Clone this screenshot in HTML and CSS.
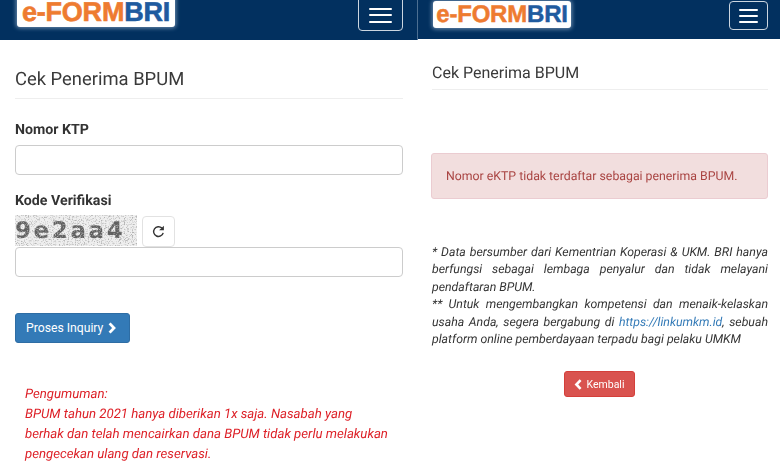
FILE: index.html
```html
<!DOCTYPE html>
<html lang="id">
<head>
<meta charset="utf-8">
<title>Cek Penerima BPUM</title>
<link rel="stylesheet" href="styles.css">
</head>
<body>
<div class="screens">
  <section class="screen screen-left">
    <header class="topbar topbar-left">
      <div class="logo logo-left"><span class="logo-orange">e-FORM</span><span class="logo-blue">BRI</span></div>
      <button class="toggle toggle-left" aria-label="Menu"><i></i><i></i><i></i></button>
    </header>
    <main class="body-left">
      <h1 class="title-left">Cek Penerima BPUM</h1>
      <label class="label label-ktp">Nomor KTP</label>
      <div class="input"></div>
      <label class="label label-kode">Kode Verifikasi</label>
      <div class="captcha-row">
        <div class="captcha">
          <span>9e2aa4</span>
          <svg class="captcha-noise" width="122" height="31">
            <filter id="speckle" x="0" y="0" width="100%" height="100%">
              <feTurbulence type="fractalNoise" baseFrequency="0.75" numOctaves="2" seed="7"/>
              <feColorMatrix type="matrix" values="0 0 0 0 .45  0 0 0 0 .45  0 0 0 0 .45  2.6 2.6 0 0 -2.55"/>
            </filter>
            <rect width="122" height="31" filter="url(#speckle)"/>
          </svg>
        </div>
        <button class="refresh" aria-label="Muat ulang">
          <svg width="13" height="13" viewBox="0 0 16 16"><path d="M13.8 9.6A6 6 0 1 1 12.2 3.8" fill="none" stroke="#333" stroke-width="1.7"/><path d="M14.6 .8v5.8H8.8z" fill="#333"/></svg>
        </button>
      </div>
      <div class="input input-code"></div>
      <button class="btn btn-blue">Proses Inquiry
        <svg class="chev" width="10" height="12" viewBox="0 0 10 12"><path d="M2.6 1.4 7 6l-4.4 4.6" fill="none" stroke="#fff" stroke-width="2.8"/></svg>
      </button>
      <p class="notice">Pengumuman:<br>BPUM tahun 2021 hanya diberikan 1x saja. Nasabah yang berhak dan telah mencairkan dana BPUM tidak perlu melakukan pengecekan ulang dan reservasi.</p>
    </main>
  </section>
  <section class="screen screen-right">
    <header class="topbar topbar-right">
      <div class="logo logo-right"><span class="logo-orange">e-FORM</span><span class="logo-blue">BRI</span></div>
      <button class="toggle toggle-right" aria-label="Menu"><i></i><i></i><i></i></button>
    </header>
    <main class="body-right">
      <h1 class="title-right">Cek Penerima BPUM</h1>
      <div class="alert">Nomor eKTP tidak terdaftar sebagai penerima BPUM.</div>
      <p class="note">* Data bersumber dari Kementrian Koperasi &amp; UKM. BRI hanya berfungsi sebagai lembaga penyalur dan tidak melayani pendaftaran BPUM.<br>** Untuk mengembangkan kompetensi dan menaik-kelaskan usaha Anda, segera bergabung di <a href="#">https://linkumkm.id</a>, sebuah platform online pemberdayaan terpadu bagi pelaku UMKM</p>
      <div class="back-row">
        <button class="btn btn-red">
          <svg class="chev" width="9" height="11" viewBox="0 0 9 11"><path d="M6.6 1.2 2.4 5.5l4.2 4.3" fill="none" stroke="#fff" stroke-width="2.6"/></svg>
          Kembali</button>
      </div>
    </main>
  </section>
</div>
</body>
</html>
```
FILE: styles.css
```css
* { box-sizing: border-box; }
html, body { margin: 0; padding: 0; background: #fff; }
body { width: 780px; height: 470px; overflow: hidden; font-family: Roboto, "Liberation Sans", sans-serif; color: #333; text-rendering: geometricPrecision; }
.screens { display: grid; grid-template-columns: 418px 362px; height: 470px; filter: blur(.35px); }
.screen { overflow: hidden; height: 470px; }

.topbar { display: flex; justify-content: space-between; align-items: flex-end; background: #02305f; overflow: hidden; }
.topbar-left { height: 40px; padding: 0 14px 9px 17px; border-right: 1px solid #4d6f92; }
.topbar-right { height: 39px; padding: 0 12px 9px 15px; }

.logo { display: flex; align-items: center; justify-content: center; background: #fff; border-radius: 3px; font-family: "Liberation Sans", sans-serif; font-weight: 700; white-space: nowrap; box-shadow: 0 0 4px 1px #6f8fb0; }
.logo-left { width: 158px; height: 38px; flex: none; margin-bottom: 4px; padding-top: 9px; font-size: 27px; letter-spacing: -.2px; -webkit-text-stroke: .6px currentColor; }
.logo-right { width: 138px; height: 27px; margin-bottom: 2px; font-size: 24px; letter-spacing: -.2px; -webkit-text-stroke: .5px currentColor; }
.logo-orange { color: #ee7b30; }
.logo-blue { color: #1f5b9f; }

.toggle { display: flex; flex-direction: column; justify-content: center; flex: none; padding: 0; background: transparent; border: 1px solid #ccd6e0; border-radius: 4px; }
.toggle i { display: block; height: 2px; background: #fff; border-radius: 1px; }
.toggle-left { width: 45px; height: 40px; padding: 8px 10px 0; gap: 4.5px; }
.toggle-right { width: 39px; height: 29px; padding: 0 9px; gap: 4px; }

.body-left { padding: 0 15px; }
.title-left { margin: 29px 0 0; padding-bottom: 8px; font-size: 18.4px; line-height: 21px; font-weight: 400; color: #3a3a3a; border-bottom: 1px solid #eee; }
.label { display: block; font-size: 14.2px; font-weight: 700; line-height: 17px; color: #333; }
.label-ktp { margin-top: 23px; margin-bottom: 6px; }
.label-kode { margin-top: 18px; margin-bottom: 5px; }
.input { height: 30px; width: 388px; background: #fff; border: 1px solid #ccc; border-radius: 4px; }
.captcha-row { display: flex; align-items: flex-end; gap: 5px; height: 32px; }
.captcha { position: relative; width: 122px; height: 31px; overflow: hidden; background: #efefef; align-self: flex-start; }
.captcha span { display: block; font-family: "DejaVu Sans", sans-serif; font-size: 23px; font-weight: 700; line-height: 33px; letter-spacing: 2.6px; color: #606060; }
.captcha-noise { position: absolute; top: 0; left: 0; }
.refresh { display: flex; align-items: center; justify-content: center; width: 33px; height: 31px; padding: 0; background: #fff; border: 1px solid #e2e2e2; border-radius: 4px; }

.btn { display: inline-flex; align-items: center; border-radius: 3px; color: #fff; font-family: Roboto, "Liberation Sans", sans-serif; }
.btn-blue { margin-top: 36px; width: 115px; height: 30px; padding: 0 0 0 10px; gap: 4px; font-size: 12.2px; background: #337ab7; border: 1px solid #2e6da4; white-space: nowrap; }
.btn-red { width: 71px; height: 26px; padding: 0 0 0 9px; gap: 4px; font-size: 10.5px; background: #d9534f; border: 1px solid #d43f3a; }

.notice { margin: 42px 0 0; padding: 0 10px; font-size: 13.2px; line-height: 20px; font-style: italic; color: #dd1f26; }

.body-right { padding: 0 12px 0 14px; }
.title-right { margin: 24px 0 0; padding-bottom: 7px; font-size: 16px; line-height: 19px; font-weight: 400; color: #3a3a3a; border-bottom: 1px solid #eee; }
.alert { margin: 63px 0 0 -1px; height: 46px; padding: 0 14px; font-size: 12.3px; line-height: 46px; color: #a94442; background: #f2dede; border: 1px solid #ebccd1; border-radius: 3px; white-space: nowrap; }
.note { margin: 46px 0 0; font-size: 12.3px; line-height: 17.4px; font-style: italic; text-align: justify; color: #333; }
.note a { color: #337ab7; text-decoration: none; }
.back-row { display: flex; justify-content: center; margin-top: 22px; padding-right: 2px; }
```
